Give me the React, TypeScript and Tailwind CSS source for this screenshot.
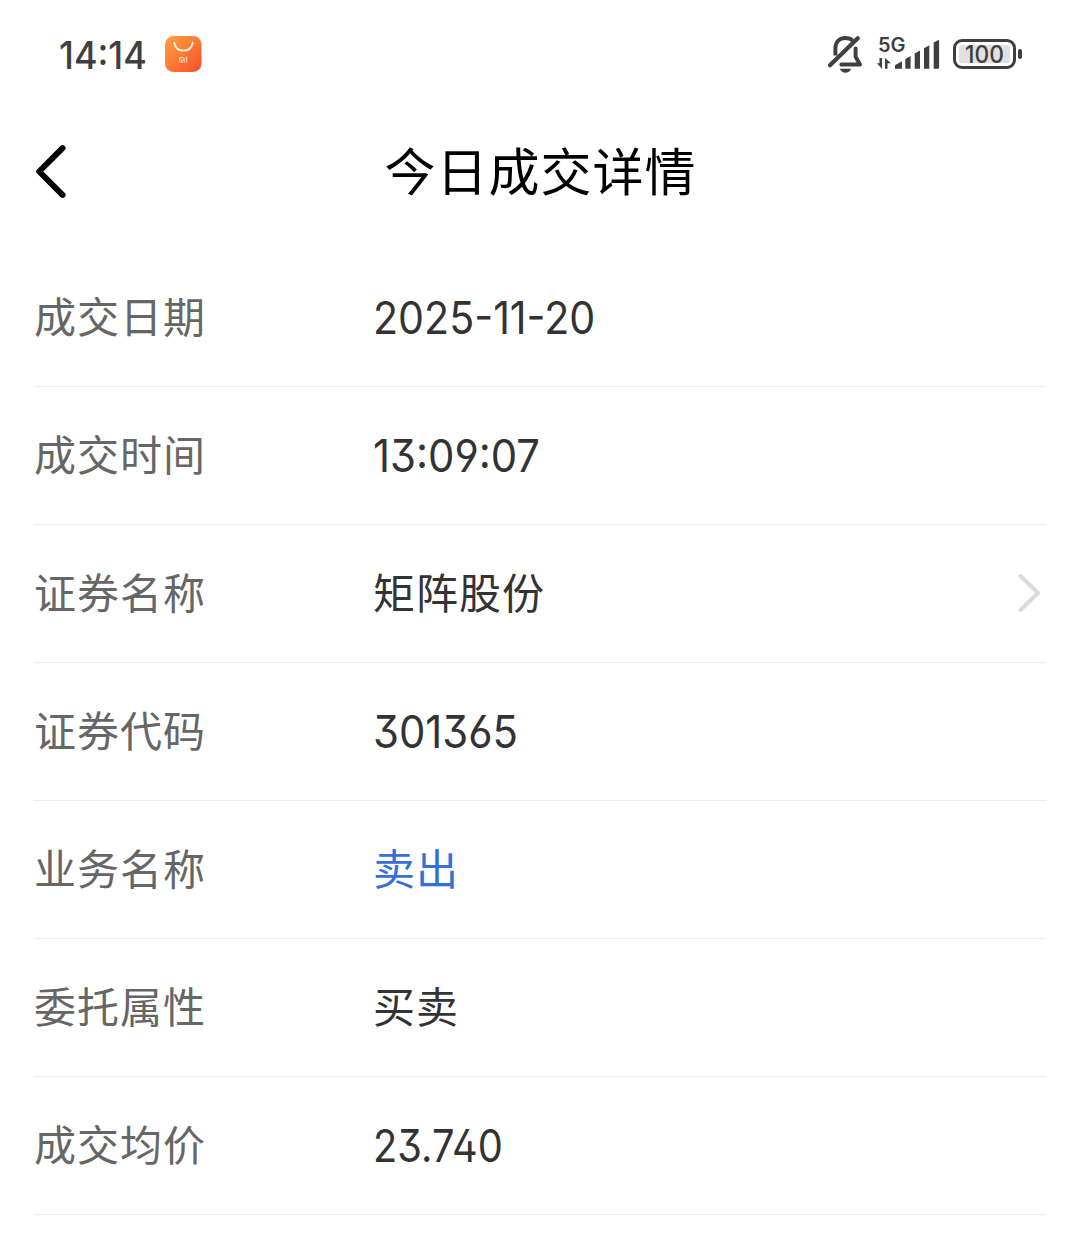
import type { ReactNode } from "react";

type Detail = {
  label: string;
  value: ReactNode;
  valueClass?: string;
  link?: boolean;
};

// Open 6/9 and flat-topped 3, slightly condensed
const numeric =
  "font-['Inter',sans-serif] pt-[1px] text-[44.5px] [font-feature-settings:'ss01','cv09'] origin-left text-[#333333]";
const chinese = "pb-[7px] text-[42px] tracking-[1px]";

const details: Detail[] = [
  { label: "成交日期", value: "2025-11-20", valueClass: `${numeric} scale-x-[0.925]` },
  { label: "成交时间", value: "13:09:07", valueClass: `${numeric} scale-x-[0.94]` },
  { label: "证券名称", value: "矩阵股份", valueClass: `${chinese} text-[#333333]`, link: true },
  { label: "证券代码", value: "301365", valueClass: `${numeric} scale-x-[0.94]` },
  { label: "业务名称", value: "卖出", valueClass: `${chinese} text-[#3370d9]` },
  { label: "委托属性", value: "买卖", valueClass: `${chinese} text-[#333333]` },
  { label: "成交均价", value: "23.740", valueClass: `${numeric} scale-x-[0.895]` },
];

function StoreIcon() {
  return (
    <svg className="ml-[19px] h-[37px] w-[37px]" viewBox="0 0 37 37">
      <defs>
        <linearGradient id="storeGrad" x1="0" y1="0" x2="1" y2="1">
          <stop offset="0%" stopColor="#fda03c" />
          <stop offset="50%" stopColor="#fb7a35" />
          <stop offset="100%" stopColor="#fb4b2b" />
        </linearGradient>
      </defs>
      <rect x="0" y="0" width="36.5" height="36" rx="8.5" fill="url(#storeGrad)" />
      <path d="M9.300 6.700c1 5 4.700 8 9.200 8s8.200-3 9.200-8" fill="none" stroke="#fff4e4" strokeWidth="1.800" strokeLinecap="round" />
      <path d="M14.700 26.500v-5h2.600q1.800 0 1.800 1.500v3.500M16.900 23.200v3.300M21.500 21v5.500" fill="none" stroke="#ffe0c6" strokeWidth="1.200" />
    </svg>
  );
}

function MutedBellIcon() {
  return (
    <svg className="h-[40px] w-[38px]" viewBox="0 0 38 40" fill="none" stroke="#3f3f3f" strokeWidth="3.900">
      <path d="M8.400 21.500V14.500C8.400 7.800 12.800 4 18.500 4c3 0 5.500 1 7.300 2.700" />
      <path d="M28.600 14.500v8.300l4.400 7.700H14.300" strokeLinejoin="round" strokeLinecap="round" />
      <path d="M3 31.200L30.800 4.200" strokeWidth="4.200" strokeLinecap="round" />
      <path d="M12.800 34.700h11.400c-1.200 2.700-3.200 4-5.700 4S14 37.400 12.800 34.700z" fill="#3f3f3f" stroke="none" />
    </svg>
  );
}

function SignalIcon() {
  return (
    <div className="relative h-[40px] w-[64px]">
      <span className="absolute left-[1px] top-[1px] font-['Inter',sans-serif] text-[20px] font-semibold leading-[20px]">5G</span>
      <svg className="absolute inset-0" width="64" height="40" viewBox="0 0 64 40" fill="#3f3f3f">
        <path d="M2.500 24h2.500v11L0 29.300h2.500zM8 34.700V24l6 5.200h-3.500v5.500z" />
        <path d="M18 34.700v-2.900q0-.8.700-1.100l6.300-3.400v7.400z" />
        <path d="M28.300 34.700v-9.800l5.300-2.800v12.600zM37.700 34.700V19.400l5.300-2.900v18.200zM47 34.700V14.200l5.300-3v23.500zM56.700 34.700V8.600l4.200-2.400q1.200-.5 1.200.8v26.500q0 1.200-1.200 1.200z" />
      </svg>
    </div>
  );
}

function Battery() {
  return (
    <div className="flex items-center">
      <div className="flex h-[30px] w-[63px] rounded-[9px] border-[3px] border-[#3f3f3f] p-[3px]">
        <div className="flex w-full items-center justify-center rounded-[3px] bg-[#e1e1e1] font-['Inter',sans-serif] text-[24px] font-medium leading-none">
          <span className="scale-x-[0.95] pt-[2px]">100</span>
        </div>
      </div>
      <div className="ml-[2px] h-[10px] w-[4px] rounded-[2px] bg-[#3f3f3f]" />
    </div>
  );
}

function StatusBar() {
  return (
    <div className="flex h-[108px] items-center pl-[59px] pr-[57px] text-[#3f3f3f]">
      <span className="w-[87px] origin-left scale-x-[0.945] whitespace-nowrap pt-[2px] font-['Inter',sans-serif] text-[38px] font-medium leading-[40px]">14:14</span>
      <StoreIcon />
      <div className="ml-auto flex items-center">
        <MutedBellIcon />
        <div className="ml-[12px]">
          <SignalIcon />
        </div>
        <div className="ml-[12px]">
          <Battery />
        </div>
      </div>
    </div>
  );
}

function Header() {
  return (
    <header className="flex h-[141px] items-start px-[34px] pt-[34px] text-black">
      <button className="h-[60px] w-[34px]" aria-label="返回">
        <svg width="34" height="60" viewBox="0 0 34 60" fill="none" stroke="currentColor" strokeWidth="6" strokeLinecap="round" strokeLinejoin="round">
          <path d="M28.500 6.200L5.200 29.500L28.500 52.800" />
        </svg>
      </button>
      <h1 className="flex-1 pr-[32px] text-center text-[51px] leading-[54px] tracking-[1px]">今日成交详情</h1>
    </header>
  );
}

function DetailRow({ label, value, valueClass, link }: Detail) {
  return (
    <div className="flex h-[138px] items-center border-b border-[#eeeeee]">
      <span className="w-[339px] pb-[7px] text-[42px] tracking-[1px] text-[#666666]">{label}</span>
      <span className={`flex-1 ${valueClass ?? ""}`}>{value}</span>
      {link && (
        <svg className="mb-[2px] mr-[4px]" width="26" height="42" viewBox="0 0 26 42" fill="none" stroke="#dadada" strokeWidth="4" strokeLinecap="round" strokeLinejoin="round">
          <path d="M4.500 4L22 21L4.500 38" />
        </svg>
      )}
    </div>
  );
}

export default function App() {
  return (
    <div className="h-[1245px] w-full overflow-hidden bg-white font-['Noto_Sans_CJK_SC',sans-serif]">
      <StatusBar />
      <Header />
      <main className="pl-[34px] pr-[33px]">
        {details.map((item) => (
          <DetailRow key={item.label} {...item} />
        ))}
      </main>
    </div>
  );
}
